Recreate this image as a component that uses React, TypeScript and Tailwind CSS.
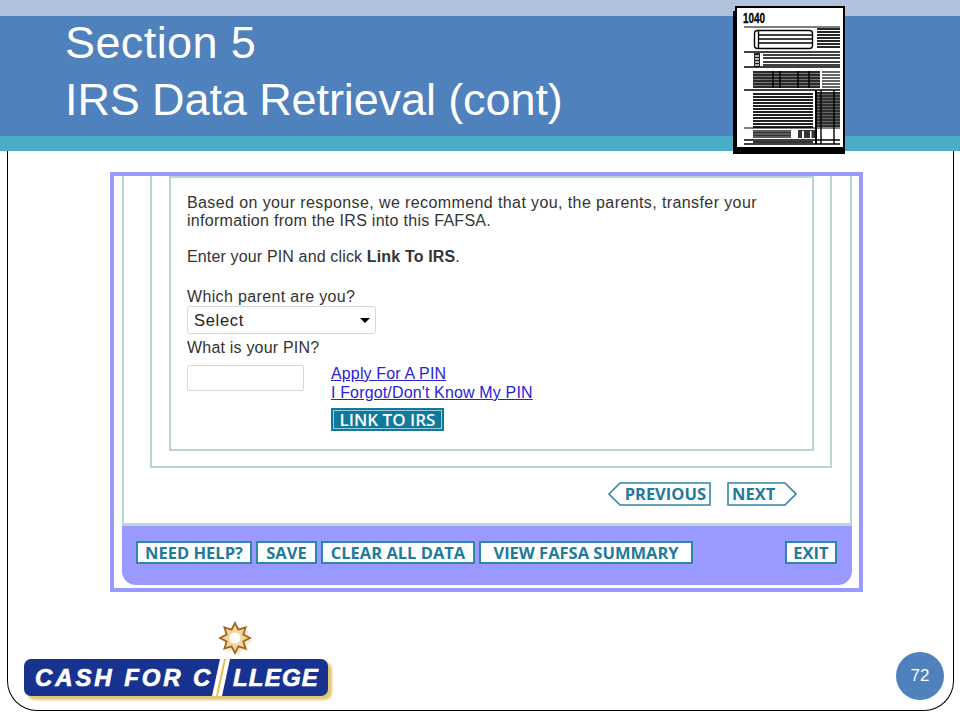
import React from "react";

const range = (a: number, b: number, s: number) => {
  const out: number[] = [];
  for (let v = a; v <= b; v += s) out.push(v);
  return out;
};

function HLines({ x1, x2, ys, w = 1.5, c = "#000" }: { x1: number; x2: number; ys: number[]; w?: number; c?: string }) {
  return (
    <>
      {ys.map((y) => (
        <line key={y} x1={x1} x2={x2} y1={y} y2={y} stroke={c} strokeWidth={w} />
      ))}
    </>
  );
}

function FormIcon() {
  return (
    <svg className="absolute left-[720px] top-0" width="140" height="160" viewBox="0 0 140 160">
      <rect x="13" y="11" width="112" height="143" fill="#000" />
      <rect x="16" y="7" width="108" height="141" fill="#fff" stroke="#000" strokeWidth="2" />
      <text x="23" y="22.5" fontFamily="'Liberation Sans Narrow','Liberation Sans',sans-serif" fontWeight="700" fontSize="15" stroke="#000" strokeWidth="0.3" textLength="22" lengthAdjust="spacingAndGlyphs">1040</text>
      <line x1="24" x2="120" y1="27" y2="27" stroke="#000" strokeWidth="1.2" />
      <HLines x1={97} x2={120} ys={range(29, 47, 3)} w={1.7} />
      <rect x="34.5" y="30.5" width="58" height="18" rx="3" fill="#fff" stroke="#000" strokeWidth="1.4" />
      <line x1="38.5" x2="38.5" y1="30" y2="49" stroke="#000" strokeWidth="1.4" />
      <HLines x1={38} x2={92} ys={[35, 39, 43]} w={1.3} />
      <line x1="24" x2="120" y1="52" y2="52" stroke="#000" strokeWidth="1.4" />
      <rect x="34" y="53" width="6" height="14" fill="#222" />
      <HLines x1={35} x2={39} ys={[56, 59, 62, 65]} w={1.3} c="#fff" />
      <HLines x1={43} x2={120} ys={[55, 58, 62, 65]} w={1.3} />
      <line x1="24" x2="120" y1="67" y2="67" stroke="#000" strokeWidth="1.4" />
      <rect x="33" y="71" width="67" height="17" fill="#777" />
      <HLines x1={33} x2={100} ys={range(72, 88, 3)} w={1.4} c="#111" />
      <HLines x1={102} x2={120} ys={range(72, 88, 3)} w={1.5} c="#333" />
      {[53, 60, 78, 89].map((x) => (
        <line key={x} x1={x} x2={x} y1="71" y2="88" stroke="#000" strokeWidth="1.4" />
      ))}
      <line x1="24" x2="120" y1="90" y2="90" stroke="#000" strokeWidth="1.4" />
      <HLines x1={33} x2={93} ys={range(94, 127, 3)} w={1.8} c="#222" />
      <rect x="97" y="92" width="23" height="35" fill="#666" />
      <HLines x1={97} x2={120} ys={range(93, 127, 3)} w={1.3} c="#111" />
      <line x1="96" x2="96" y1="90" y2="144" stroke="#000" strokeWidth="2" />
      <line x1="101" x2="101" y1="90" y2="144" stroke="#000" strokeWidth="1.4" />
      <line x1="114" x2="114" y1="90" y2="144" stroke="#000" strokeWidth="1.4" />
      <line x1="24" x2="120" y1="128" y2="128" stroke="#000" strokeWidth="1.2" />
      <rect x="33" y="130" width="38" height="8" fill="#333" />
      <HLines x1={33} x2={71} ys={[131, 134, 137]} w={1} c="#888" />
      <rect x="78" y="130" width="17" height="8" fill="#333" />
      <rect x="82" y="131" width="2" height="7" fill="#fff" />
      <rect x="90" y="131" width="1.5" height="7" fill="#fff" />
      <line x1="24" x2="120" y1="140" y2="140" stroke="#000" strokeWidth="1.3" />
      <line x1="24" x2="120" y1="144" y2="144" stroke="#000" strokeWidth="1.3" />
      <rect x="33" y="141" width="60" height="2" fill="#333" />
    </svg>
  );
}

function NavButton({ label, w }: { label: string; w: number }) {
  return (
    <button
      style={{ width: w }}
      className="h-[23px] border-2 border-[#2f87a8] bg-white text-[16.5px] leading-[19px] font-bold text-[#1f7a9c] font-['Open_Sans',sans-serif] text-center"
    >
      {label}
    </button>
  );
}

function Star() {
  const pts: string[] = [];
  for (let i = 0; i < 16; i++) {
    const r = i % 2 === 0 ? 15 : 9;
    const a = (Math.PI * 2 * i) / 16 - Math.PI / 2;
    pts.push(`${20 + r * Math.cos(a)},${20 + r * Math.sin(a)}`);
  }
  return (
    <svg width="40" height="40" viewBox="0 0 40 40" className="absolute left-[191px] top-[-41px]">
      <polygon points={pts.join(" ")} transform="translate(3 3)" fill="#ecd9a8" opacity="0.6" />
      <polygon points={pts.join(" ")} fill="#f2d6a2" stroke="#a4651f" strokeWidth="1.8" />
      <circle cx="20" cy="20" r="5.5" fill="#fff" />
    </svg>
  );
}

function Logo() {
  return (
    <div className="relative w-[308px] h-[41px] mb-[10px]">
      <Star />
      <div className="absolute left-[3px] top-[3px] w-[305px] h-[38px] rounded-[8px] bg-[#e2c871] blur-[1px]" />
      <div className="absolute left-0 top-0 w-[304px] h-[37px] rounded-[7px] bg-[#17338f] flex items-center pl-[11px] font-['Liberation_Sans',sans-serif] font-bold italic text-white text-[24px] leading-none whitespace-pre [-webkit-text-stroke:0.7px_white]">
        <span className="tracking-[2.9px]">CASH FOR C</span>
      </div>
      <svg className="absolute left-[187px] top-0" width="20" height="37" viewBox="0 0 20 37">
        <polygon points="9,0 19,0 11,37 1,37" fill="#fff" />
        <polygon points="13,0 15,0 7,37 5,37" fill="#e3bd4c" />
      </svg>
      <span className="absolute left-[209px] top-[6px] font-['Liberation_Sans',sans-serif] font-bold italic text-white text-[24px] leading-[25px] tracking-[1.2px] [-webkit-text-stroke:0.7px_white]">LLEGE</span>
    </div>
  );
}

export default function App() {
  return (
    <div className="relative w-[960px] h-[720px] bg-white overflow-hidden font-['Liberation_Sans',Arial,sans-serif]">
      <div className="h-[16px] bg-[#b1c1dc]" />
      <header className="h-[120px] bg-[#4f81bd] flex flex-col justify-center pl-[65px] pb-[10px] text-white text-[45px] leading-[57px] tracking-[-0.1px]">
        <div className="tracking-[0.4px]">Section 5</div>
        <div>IRS Data Retrieval (cont)</div>
      </header>
      <div className="h-[15px] bg-[#4bacc6]" />
      <FormIcon />

      <main className="ml-[7px] w-[947px] h-[560px] border-x border-b border-black rounded-b-[30px] flex flex-col">
        <section className="ml-[102px] mt-[21px] w-[753px] h-[420px] border-4 border-[#9999ff] flex flex-col text-[#333333] text-[16px] leading-[18px]">
          <div className="h-[350px] ml-[8px] mr-[7px] border-x-2 border-b-[3px] border-[#b9d5d5] pl-[26px] pr-[18px] flex flex-col">
            <div className="h-[292px] border-x-2 border-b-2 border-[#b9d5d5] pl-[17px] pr-[16px]">
              <div className="h-[275px] border-x-2 border-y-2 border-[#b9d5d5] pl-[16px] pt-[16px]">
                <p>
                  <span className="tracking-[0.4px]">Based on your response, we recommend that you, the parents, transfer your</span>
                  <br />
                  <span className="tracking-[0.28px]">information from the IRS into this FAFSA.</span>
                </p>
                <p className="mt-[18px] tracking-[0.15px]">Enter your PIN and click <b>Link To IRS</b>.</p>
                <p className="mt-[22px] tracking-[0.35px]">Which parent are you?</p>
                <div className="w-[189px] h-[28px] border border-[#d8d8d8] rounded-[3px] flex items-center justify-between pl-[6px] pr-[5px] text-[16.5px] tracking-[0.7px] text-[#222]">
                  <span>Select</span>
                  <span className="w-0 h-0 border-x-[5px] border-x-transparent border-t-[5px] border-t-black" />
                </div>
                <p className="mt-[5px] tracking-[0.2px]">What is your PIN?</p>
                <div className="flex mt-[8px]">
                  <div className="w-[117px] h-[26px] border border-[#d8d8d8] rounded-[2px]" />
                  <div className="ml-[27px] flex flex-col items-start tracking-[0.15px]">
                    <a className="text-[#2a22d8] underline leading-[18px]">Apply For A PIN</a>
                    <a className="text-[#2a22d8] underline leading-[19px]">I Forgot/Don't Know My PIN</a>
                    <button className="mt-[6px] w-[113px] h-[23px] bg-[#0f7a9b] border-2 border-[#0f7a9b] outline outline-1 -outline-offset-3 outline-white/60 text-white text-[17px] tracking-normal leading-[18px] font-semibold font-['Open_Sans',sans-serif]">LINK TO IRS</button>
                  </div>
                </div>
              </div>
            </div>
            <div className="flex mt-[14px] ml-[458px]">
              <div className="relative w-[103px] h-[24px] flex items-center justify-end pr-[5px] text-[16.5px] font-bold text-[#1f7a9c] font-['Open_Sans',sans-serif]">
                <svg className="absolute inset-0" width="103" height="24" viewBox="0 0 103 24">
                  <polygon points="1,12 12,1 102,1 102,23 12,23" fill="#fff" stroke="#2f87a8" strokeWidth="1.6" />
                </svg>
                <span className="relative">PREVIOUS</span>
              </div>
              <div className="relative ml-[16px] w-[70px] h-[24px] flex items-center pl-[5px] text-[16.5px] font-bold text-[#1f7a9c] font-['Open_Sans',sans-serif]">
                <svg className="absolute inset-0" width="70" height="24" viewBox="0 0 70 24">
                  <polygon points="1,1 58,1 69,12 58,23 1,23" fill="#fff" stroke="#2f87a8" strokeWidth="1.6" />
                </svg>
                <span className="relative">NEXT</span>
              </div>
            </div>
          </div>
          <div className="h-[59px] ml-[8px] mr-[7px] bg-[#9999ff] rounded-bl-[14px] rounded-br-[14px] flex items-start pt-[15px] pl-[14px] pr-[15px] gap-[4px]">
            <NavButton label="NEED HELP?" w={116} />
            <NavButton label="SAVE" w={61} />
            <NavButton label="CLEAR ALL DATA" w={154} />
            <NavButton label="VIEW FAFSA SUMMARY" w={214} />
            <div className="flex-1" />
            <NavButton label="EXIT" w={52} />
          </div>
        </section>
        <footer className="flex-1 flex items-end justify-between pl-[16px] pr-[9px]">
          <Logo />
          <div className="w-[48px] h-[48px] rounded-full bg-[#4f81bd] text-white text-[17px] flex items-center justify-center mb-[10px]">72</div>
        </footer>
      </main>
    </div>
  );
}
